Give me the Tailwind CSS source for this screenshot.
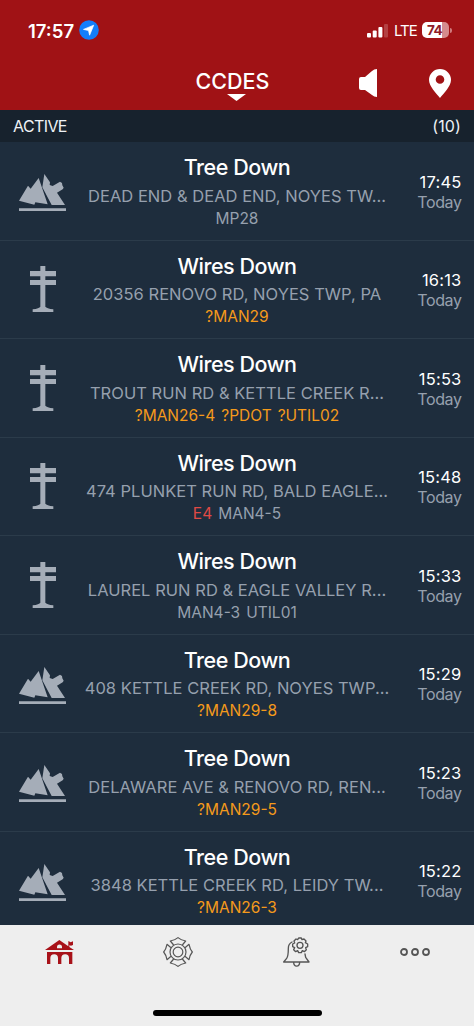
<!DOCTYPE html>
<html lang="en">
<head>
<meta charset="utf-8">
<meta name="viewport" content="width=device-width, initial-scale=1">
<title>CCDES Active Incidents</title>
<script src="https://cdn.jsdelivr.net/npm/@tailwindcss/browser@4"></script>
</head>
<body class="h-[1026px] w-[474px] overflow-hidden bg-[#1e2d3d] font-['Inter',sans-serif]">
<svg class="hidden">
  <symbol id="tree" viewBox="57 102 141 111">
    <path fill="#a5adb8" d="M57 182 84 137 92 146 116 114 143 193 106 187 103 194ZM133 102 150 127 149 135 158 138 180 125 186 129 187 136 191 143 188 148 171 158 195 195H155L127 142ZM57 205H198V213H57Z"/>
  </symbol>
  <symbol id="pole" viewBox="89 78 78 138">
    <path fill="#a5adb8" d="M120 78H135V93H167V109H135V120H167V135H135V200Q139 205 159 208V216H97V208Q117 205 120 200V135H89V120H120V109H89V93H120Z"/>
  </symbol>
</svg>
<div class="flex h-full flex-col">
  <header class="flex h-[110px] shrink-0 flex-col bg-[#a01215] text-white">
    <div class="flex h-[60px] items-center pl-[28px] pr-[22px]">
      <span class="w-[50px] pt-px text-[18.5px] font-semibold leading-6">17:57</span>
      <svg class="ml-px size-5" viewBox="0 0 20 20"><circle cx="10" cy="10" r="9.8" fill="#147efb"/><path d="M14.7 5.2 10.6 15.2 9.5 10.5 4.5 9.4Z" fill="#fff" stroke="#fff" stroke-width=".7" stroke-linejoin="round"/></svg>
      <svg class="ml-auto h-[15px] w-[21px]" viewBox="0 0 21 15"><g fill="#fff"><rect x="0" y="10" width="4" height="4.5" rx="1"/><rect x="5.7" y="7.5" width="4" height="7" rx="1"/><rect x="11.4" y="4" width="4" height="10.5" rx="1"/><rect x="17" y="1" width="4" height="13.5" rx="1" opacity=".2"/></g></svg>
      <span class="ml-[6px] w-[22px] pt-px text-[15px] leading-5 tracking-[-1px]">LTE</span>
      <div class="ml-[6px] flex h-4 w-[27px] items-center justify-center rounded-[5px] bg-linear-to-r from-white from-74% to-[#d58b8d] to-74% pr-[2px] text-[13.5px] font-bold leading-4 tracking-[-0.7px] text-[#8f1c28]">74</div>
      <div class="ml-px h-[5px] w-[2px] rounded-r bg-[#d07b7d]"></div>
    </div>
    <div class="grid h-[50px] grid-cols-[1fr_90px_1fr]">
      <span></span>
      <div class="flex flex-col items-center pt-[9px]">
        <span class="mr-[9px] whitespace-nowrap text-[21.5px] font-medium leading-6">CCDES</span>
        <svg class="mr-[2px] mt-px h-[7px] w-[19px]" viewBox="0 0 19 7"><path d="M0 0H19L9.5 7Z" fill="#fff"/></svg>
      </div>
      <div class="flex items-start justify-end pr-[23px] pt-[9px]">
        <svg class="mr-[52px] h-[28px] w-[18px]" viewBox="0 0 18 28"><path d="M2 8H6L13 2Q15 0 18 0V28Q15 28 13 26L6 21H2Q0 21 0 19V10Q0 8 2 8Z" fill="#fff"/></svg>
        <svg class="h-[29px] w-[22px]" viewBox="0 0 22 29"><path fill="#fff" fill-rule="evenodd" d="M11 0A11 11 0 0 0 0 11C0 17 7 24 11 29C15 24 22 17 22 11A11 11 0 0 0 11 0ZM11 6.2A4.3 4.3 0 1 1 11 14.8A4.3 4.3 0 0 1 11 6.2Z"/></svg>
      </div>
    </div>
  </header>
  <div class="flex h-8 shrink-0 items-center justify-between bg-[#17222d] pl-[13px] pr-[13px] text-[16px] text-[#eef2f6]">
    <span class="tracking-[-0.6px]">ACTIVE</span><span class="tracking-[0.1px]">(10)</span>
  </div>
  <main id="incidents" class="min-h-0 flex-1 overflow-hidden bg-[#1e2d3d]"></main>
  <nav class="h-[101px] shrink-0 bg-[#eeeeee]">
    <div class="grid h-[54px] grid-cols-4 items-center">
      <svg class="mx-auto h-[24px] w-[29px]" viewBox="135 59 87 72"><g fill="#a81219"><path fill-rule="evenodd" d="M135 89 178 59 205 78V62L212 66 219 63V74L213 76 208 75V80L222 89ZM171 84H186V80A7.5 7.5 0 0 0 171 80Z"/><path d="M141 95H217V131H207V113A10 10 0 0 0 184 113V131H174V113A10 10 0 0 0 151 113V131H141Z"/></g></svg>
      <svg class="mx-auto h-[30px] w-[30px]" viewBox="-45 -45 90 90"><g fill="none" stroke="#555" stroke-width="3.6" stroke-linejoin="round"><circle r="24"/><circle r="14.5"/><path id="petal" d="M-13-21-23-33Q-8-36 0-43Q8-36 23-33L13-21"/><use href="#petal" transform="rotate(90)"/><use href="#petal" transform="rotate(180)"/><use href="#petal" transform="rotate(270)"/></g></svg>
      <svg class="mx-auto h-[30px] w-[27px]" viewBox="138 50 81 90"><g fill="none" stroke="#555" stroke-width="4" stroke-linejoin="round" stroke-linecap="round"><path d="M165 65Q154 70 154 84Q154 108 149 114L140 125H216L206 111L204 101M170 126A8 10 0 0 0 188 126"/><circle cx="189" cy="75" r="9"/><path d="M185 53H193L195 58 201 56 207 62 205 67 212 71V79L206 82 208 88 202 94 196 91 193 97H185L182 91 176 94 170 88 173 82 167 79V71L173 68 171 62 177 56 182 58Z"/></g></svg>
      <svg class="mx-auto h-[8px] w-[30px]" viewBox="0 0 30 8"><g fill="none" stroke="#555" stroke-width="1.8"><circle cx="4" cy="4" r="3"/><circle cx="15" cy="4" r="3"/><circle cx="26" cy="4" r="3"/></g></svg>
    </div>
    <div class="mx-auto mt-[31px] h-[6px] w-[169px] rounded-full bg-black"></div>
  </nav>
</div>
<script>
const O = "text-[#f59a1b]", R = "text-[#e04a45]", G = "text-[#96a0ae]";
const incidents = [
  ["tree", "DEAD END & DEAD END, NOYES TW...", [["MP28", G]], "17:45"],
  ["pole", "20356 RENOVO RD, NOYES TWP, PA", [["?MAN29", O]], "16:13"],
  ["pole", "TROUT RUN RD & KETTLE CREEK R...", [["?MAN26-4", O], ["?PDOT", O], ["?UTIL02", O]], "15:53"],
  ["pole", "474 PLUNKET RUN RD, BALD EAGLE...", [["E4", R], ["MAN4-5", G]], "15:48"],
  ["pole", "LAUREL RUN RD & EAGLE VALLEY R...", [["MAN4-3", G], ["UTIL01", G]], "15:33"],
  ["tree", "408 KETTLE CREEK RD, NOYES TWP...", [["?MAN29-8", O]], "15:29"],
  ["tree", "DELAWARE AVE & RENOVO RD, REN...", [["?MAN29-5", O]], "15:23"],
  ["tree", "3848 KETTLE CREEK RD, LEIDY TW...", [["?MAN26-3", O]], "15:22"]
];
document.getElementById("incidents").innerHTML = incidents.map(([kind, place, units, time]) => `
  <section class="grid h-[98.5px] grid-cols-[85px_304px_1fr] items-center border-b border-[#2b3b4a]">
    <svg class="mx-auto ${kind === "tree" ? "mt-[4px] h-[37px] w-[47px]" : "h-[46px] w-[26px]"}"><use href="#${kind}"/></svg>
    <div class="flex flex-col items-center self-start whitespace-nowrap pt-[11.4px]">
      <h2 class="text-[21.5px] font-medium leading-[28px] tracking-[-0.45px] text-white">${kind === "tree" ? "Tree Down" : "Wires Down"}</h2>
      <p class="mt-[2.6px] text-[16.5px] leading-[24px] tracking-[0.03px] text-[#96a0ae]">${place.replace("&", "&amp;")}</p>
      <p class="flex gap-[6px] text-[15.5px] leading-[21px]">${units.map(([u, c]) => `<span class="${c}">${u}</span>`).join("")}</p>
    </div>
    <div class="flex flex-col items-end self-start pr-[12.5px] pt-[29.6px] leading-5">
      <span class="text-[16.5px] tracking-[0.2px] text-white">${time}</span>
      <span class="text-[16px] tracking-[-0.4px] text-[#96a0ae]">Today</span>
    </div>
  </section>`).join("");
</script>
</body>
</html>
